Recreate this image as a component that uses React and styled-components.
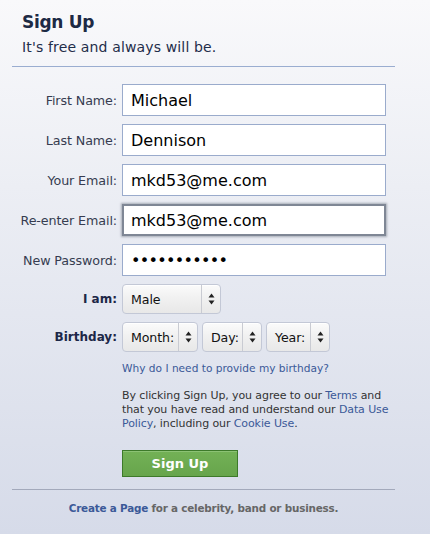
import React from "react";
import styled, { createGlobalStyle } from "styled-components";

const Global = createGlobalStyle`
  html, body { margin: 0; padding: 0; }
  body {
    width: 430px;
    height: 534px;
    overflow: hidden;
    background: linear-gradient(180deg, #f9f9fb 0%, #eceef4 35%, #d6dbe9 100%);
    font-family: "DejaVu Sans", "Liberation Sans", sans-serif;
  }
`;

const Page = styled.div`
  width: 430px;
  height: 534px;
  box-sizing: border-box;
  padding-top: 11px;
`;

const Header = styled.div`
  padding-left: 22px;
`;

const Title = styled.h1`
  margin: 0;
  font-size: 17px;
  font-weight: bold;
  color: #1d2a44;
  line-height: 22px;
  letter-spacing: -0.3px;
`;

const Subtitle = styled.div`
  margin-top: 4px;
  font-size: 14px;
  color: #1f2d4a;
  line-height: 20px;
  letter-spacing: 0.15px;
`;

const Divider = styled.hr`
  margin: ${p => p.$mt}px 35px 0 12px;
  border: 0;
  height: 1px;
  background: ${p => p.$color};
`;

const Form = styled.div`
  display: grid;
  grid-template-columns: 105px 1fr;
  column-gap: 5px;
  row-gap: 8px;
  margin-top: 17px;
  padding-left: 12px;
  padding-right: 44px;
  align-items: center;
`;

const Label = styled.label`
  text-align: right;
  font-size: ${p => (p.$bold ? "12px" : "12.7px")};
  color: ${p => (p.$bold ? "#1c2747" : "#363c50")};
  font-weight: ${p => (p.$bold ? "bold" : "normal")};
  white-space: nowrap;
  letter-spacing: ${p => (p.$bold ? "0" : "-0.1px")};
`;

const Input = styled.div`
  box-sizing: border-box;
  height: 32px;
  background: #fff;
  border: ${p => (p.$focus ? "2px solid #7f8795" : "1px solid #9aabcc")};
  box-shadow: ${p => (p.$focus ? "0 0 2px 1px rgba(110,118,132,0.55)" : "none")};
  padding-left: ${p => (p.$focus ? "7px" : "8px")};
  display: flex;
  align-items: center;
  font-size: 16px;
  color: #000;
  letter-spacing: ${p => (p.$dots ? "-0.7px" : "0")};
`;

const SelectRow = styled.div`
  display: flex;
  gap: 4px;
`;

const Select = styled.div`
  box-sizing: border-box;
  width: ${p => p.$w}px;
  height: 30px;
  border: 1px solid #c3c8d6;
  border-radius: 4px;
  background: linear-gradient(180deg, #fbfbfb 0%, #f1f1f1 45%, #e8e8e8 100%);
  box-shadow: inset 0 1px 0 #fff;
  display: flex;
  align-items: stretch;
  font-size: 12.6px;
  color: #111;
`;

const SelectText = styled.span`
  flex: 1;
  display: flex;
  align-items: center;
  padding-left: 8px;
  letter-spacing: -0.1px;
`;

const SelectArrow = styled.span`
  width: 18px;
  border-left: 1px solid #c9cbd2;
  display: flex;
  align-items: center;
  justify-content: center;
`;

const Arrows = () => (
  <svg width="7" height="12" viewBox="0 0 7 12">
    <path d="M3.5 0.5 L6.5 4.5 L0.5 4.5 Z" fill="#222" />
    <path d="M3.5 11.5 L6.5 7.5 L0.5 7.5 Z" fill="#222" />
  </svg>
);

const Below = styled.div`
  padding-left: 122px;
  padding-right: 40px;
`;

const WhyLink = styled.a`
  display: block;
  margin-top: 9px;
  font-size: 10.6px;
  color: #3b5998;
  text-decoration: none;
  line-height: 14px;
`;

const Terms = styled.p`
  margin: 14px 0 0;
  font-size: 11px;
  line-height: 14px;
  color: #333;
  letter-spacing: -0.1px;
`;

const Link = styled.a`
  color: #3b5998;
  text-decoration: none;
  font-weight: ${p => (p.$bold ? "bold" : "normal")};
`;

const Button = styled.button`
  margin-top: 19px;
  width: 116px;
  height: 27px;
  box-sizing: border-box;
  border: 1px solid #3d7a2a;
  background: linear-gradient(180deg, #73b156 0%, #67a54c 100%);
  box-shadow: inset 0 1px 0 #8cc274;
  color: #fff;
  font-family: "DejaVu Sans", sans-serif;
  font-weight: bold;
  font-size: 13px;
  padding: 0;
  display: block;
`;

const Footer = styled.div`
  margin-top: 12px;
  text-align: center;
  padding-right: 23px;
  font-size: 10.4px;
  font-weight: bold;
  color: #666;
  letter-spacing: -0.2px;
`;

const fields = [
  { label: "First Name:", value: "Michael" },
  { label: "Last Name:", value: "Dennison" },
  { label: "Your Email:", value: "mkd53@me.com" },
  { label: "Re-enter Email:", value: "mkd53@me.com", focus: true },
  { label: "New Password:", value: "•••••••••••", dots: true },
];

export default function App() {
  return (
    <Page>
      <Global />
      <Header>
        <Title>Sign Up</Title>
        <Subtitle>It's free and always will be.</Subtitle>
      </Header>
      <Divider $mt={9} $color="#9aadd0" />
      <Form>
        {fields.map(f => (
          <React.Fragment key={f.label}>
            <Label>{f.label}</Label>
            <Input $focus={f.focus} $dots={f.dots}>{f.value}</Input>
          </React.Fragment>
        ))}
        <Label $bold>I am:</Label>
        <SelectRow>
          <Select $w={99}>
            <SelectText>Male</SelectText>
            <SelectArrow><Arrows /></SelectArrow>
          </Select>
        </SelectRow>
        <Label $bold>Birthday:</Label>
        <SelectRow>
          <Select $w={76}>
            <SelectText>Month:</SelectText>
            <SelectArrow><Arrows /></SelectArrow>
          </Select>
          <Select $w={60}>
            <SelectText>Day:</SelectText>
            <SelectArrow><Arrows /></SelectArrow>
          </Select>
          <Select $w={64}>
            <SelectText>Year:</SelectText>
            <SelectArrow><Arrows /></SelectArrow>
          </Select>
        </SelectRow>
      </Form>
      <Below>
        <WhyLink href="#">Why do I need to provide my birthday?</WhyLink>
        <Terms>
          By clicking Sign Up, you agree to our <Link href="#">Terms</Link> and
          that you have read and understand our <Link href="#">Data Use Policy</Link>,
          including our <Link href="#">Cookie Use</Link>.
        </Terms>
        <Button>Sign Up</Button>
      </Below>
      <Divider $mt={12} $color="#a3a9bb" />
      <Footer>
        <Link href="#" $bold>Create a Page</Link> for a celebrity, band or business.
      </Footer>
    </Page>
  );
}
